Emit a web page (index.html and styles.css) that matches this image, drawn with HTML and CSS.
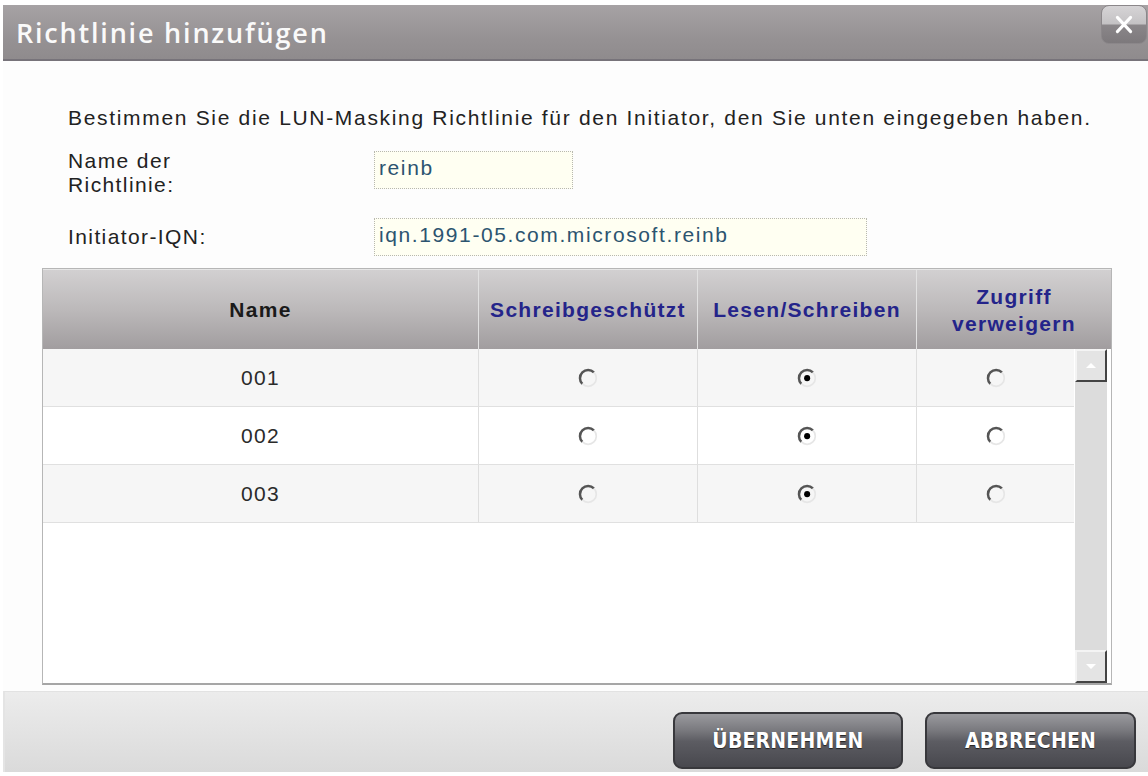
FILE: index.html
```html
<!DOCTYPE html>
<html lang="de">
<head>
<meta charset="utf-8">
<title>Richtlinie hinzufügen</title>
<link rel="stylesheet" href="styles.css">
</head>
<body>
<div class="dialog">
  <div class="titlebar">
    <span class="title">Richtlinie hinzufügen</span>
    <div class="close"><svg viewBox="0 0 46 39"><path d="M16 12 L30 27 M30 12 L16 27" stroke="#fff" stroke-width="3.2" stroke-linecap="round"/></svg></div>
  </div>
  <div class="content">
    <p class="desc">Bestimmen Sie die LUN-Masking Richtlinie für den Initiator, den Sie unten eingegeben haben.</p>
    <div class="form-row row-name">
      <label class="label">Name der<br>Richtlinie:</label>
      <div class="input input-short">reinb</div>
    </div>
    <div class="form-row row-iqn">
      <label class="label">Initiator-IQN:</label>
      <div class="input input-long">iqn.1991-05.com.microsoft.reinb</div>
    </div>
    <div class="grid">
      <div class="grid-head">
        <div class="hcell hname">Name</div>
        <div class="hcell">Schreibgeschützt</div>
        <div class="hcell">Lesen/Schreiben</div>
        <div class="hcell">Zugriff<br>verweigern</div>
      </div>
      <div class="grid-body">
        <div class="rows">
          <div class="row alt">
            <div class="cell">001</div>
            <div class="cell"><svg class="radio" viewBox="0 0 16 16"><path d="M3.9 12.3 A5.8 5.8 0 0 1 12.3 3.9" fill="none" stroke="#555" stroke-width="1.8"/><path d="M12.3 3.9 A5.8 5.8 0 0 1 3.9 12.3" fill="none" stroke="#e6e6e6" stroke-width="1.2"/></svg></div>
            <div class="cell"><svg class="radio" viewBox="0 0 16 16"><path d="M3.9 12.3 A5.8 5.8 0 0 1 12.3 3.9" fill="none" stroke="#555" stroke-width="1.8"/><path d="M12.3 3.9 A5.8 5.8 0 0 1 3.9 12.3" fill="none" stroke="#e6e6e6" stroke-width="1.2"/><circle cx="8.1" cy="8.1" r="2.2" fill="#000"/></svg></div>
            <div class="cell"><svg class="radio" viewBox="0 0 16 16"><path d="M3.9 12.3 A5.8 5.8 0 0 1 12.3 3.9" fill="none" stroke="#555" stroke-width="1.8"/><path d="M12.3 3.9 A5.8 5.8 0 0 1 3.9 12.3" fill="none" stroke="#e6e6e6" stroke-width="1.2"/></svg></div>
          </div>
          <div class="row">
            <div class="cell">002</div>
            <div class="cell"><svg class="radio" viewBox="0 0 16 16"><path d="M3.9 12.3 A5.8 5.8 0 0 1 12.3 3.9" fill="none" stroke="#555" stroke-width="1.8"/><path d="M12.3 3.9 A5.8 5.8 0 0 1 3.9 12.3" fill="none" stroke="#e6e6e6" stroke-width="1.2"/></svg></div>
            <div class="cell"><svg class="radio" viewBox="0 0 16 16"><path d="M3.9 12.3 A5.8 5.8 0 0 1 12.3 3.9" fill="none" stroke="#555" stroke-width="1.8"/><path d="M12.3 3.9 A5.8 5.8 0 0 1 3.9 12.3" fill="none" stroke="#e6e6e6" stroke-width="1.2"/><circle cx="8.1" cy="8.1" r="2.2" fill="#000"/></svg></div>
            <div class="cell"><svg class="radio" viewBox="0 0 16 16"><path d="M3.9 12.3 A5.8 5.8 0 0 1 12.3 3.9" fill="none" stroke="#555" stroke-width="1.8"/><path d="M12.3 3.9 A5.8 5.8 0 0 1 3.9 12.3" fill="none" stroke="#e6e6e6" stroke-width="1.2"/></svg></div>
          </div>
          <div class="row alt">
            <div class="cell">003</div>
            <div class="cell"><svg class="radio" viewBox="0 0 16 16"><path d="M3.9 12.3 A5.8 5.8 0 0 1 12.3 3.9" fill="none" stroke="#555" stroke-width="1.8"/><path d="M12.3 3.9 A5.8 5.8 0 0 1 3.9 12.3" fill="none" stroke="#e6e6e6" stroke-width="1.2"/></svg></div>
            <div class="cell"><svg class="radio" viewBox="0 0 16 16"><path d="M3.9 12.3 A5.8 5.8 0 0 1 12.3 3.9" fill="none" stroke="#555" stroke-width="1.8"/><path d="M12.3 3.9 A5.8 5.8 0 0 1 3.9 12.3" fill="none" stroke="#e6e6e6" stroke-width="1.2"/><circle cx="8.1" cy="8.1" r="2.2" fill="#000"/></svg></div>
            <div class="cell"><svg class="radio" viewBox="0 0 16 16"><path d="M3.9 12.3 A5.8 5.8 0 0 1 12.3 3.9" fill="none" stroke="#555" stroke-width="1.8"/><path d="M12.3 3.9 A5.8 5.8 0 0 1 3.9 12.3" fill="none" stroke="#e6e6e6" stroke-width="1.2"/></svg></div>
          </div>
        </div>
        <div class="scrollbar">
          <div class="sbtn"><svg viewBox="0 0 28 29"><path d="M9 17 L14 12 L19 17 Z" fill="#fff"/></svg></div>
          <div class="strack"></div>
          <div class="sbtn"><svg viewBox="0 0 28 29"><path d="M9 12 L19 12 L14 17 Z" fill="#fff"/></svg></div>
        </div>
      </div>
    </div>
  </div>
  <div class="footer">
    <div class="btn">ÜBERNEHMEN</div>
    <div class="btn">ABBRECHEN</div>
  </div>
</div>
</body>
</html>
```

FILE: styles.css
```css
* { box-sizing: border-box; }
html, body { margin: 0; padding: 0; }
body {
  width: 1148px;
  height: 776px;
  background: #ffffff;
  font-family: "Liberation Sans", Arial, sans-serif;
  overflow: hidden;
}
.dialog {
  margin-top: 5px;
  margin-left: 3px;
  width: 1145px;
  display: flex;
  flex-direction: column;
}
.titlebar {
  height: 56px;
  background: linear-gradient(#a6a2a4, #969294 60%, #8f8b8d);
  border-bottom: 2px solid #77737a;
  display: flex;
  align-items: flex-start;
  justify-content: space-between;
}
.title {
  color: #fafafa;
  font-family: "Open Sans", "DejaVu Sans", sans-serif;
  font-weight: 600;
  font-size: 27px;
  line-height: 28px;
  margin-top: 14px;
  margin-left: 13px;
  letter-spacing: 1.8px;
}
.close {
  width: 46px;
  height: 39px;
  border-radius: 8px;
  border: 1px solid #8b878a;
  background: linear-gradient(#d6d4d6 0%, #c4c2c4 48%, #8a8689 52%, #7d797c 100%);
  margin-right: 1px;
}
.close svg { display: block; width: 44px; height: 37px; }
.content {
  height: 630px;
  background: #fdfdfd;
  padding: 0 32px 0 39px;
  display: flex;
  flex-direction: column;
}
.desc {
  margin: 47px 0 0 26px;
  font-size: 21px;
  line-height: 20px;
  color: #222;
  letter-spacing: 1.68px;
  white-space: nowrap;
}
.form-row {
  display: flex;
  align-items: flex-start;
  padding-left: 26px;
}
.row-name { margin-top: 21px; }
.row-iqn { margin-top: 21px; align-items: center; }
.label {
  width: 306px;
  font-size: 21px;
  line-height: 24px;
  color: #222;
  letter-spacing: 1.4px;
}
.row-iqn .label { line-height: 20px; }
.input {
  height: 38px;
  background: #fffff2;
  border: 1px dotted #b8b8b0;
  color: #2c5470;
  font-size: 21px;
  line-height: 22px;
  padding: 5px 4px;
  letter-spacing: 1.6px;
  white-space: nowrap;
}
.row-name .input { margin-top: 2px; }
.input-short { width: 199px; }
.input-long { width: 493px; }
.grid {
  margin-top: 12px;
  width: 1070px;
  height: 417px;
  border: 1px solid #b6b6b6;
  border-bottom: 2px solid #a6a6a6;
  display: flex;
  flex-direction: column;
  background: #fff;
}
.grid-head {
  height: 80px;
  display: grid;
  grid-template-columns: 435px 219px 219px 1fr;
  background: linear-gradient(#d2d0d1 0%, #bcb9ba 50%, #a19d9f 100%);
  border-top: 1px solid #e6e6e6;
}
.hcell {
  display: flex;
  align-items: center;
  justify-content: center;
  text-align: center;
  font-size: 21px;
  line-height: 27px;
  font-weight: bold;
  color: #24248a;
  border-left: 1px solid #e2e2e2;
  padding-top: 0;
  letter-spacing: 1.3px;
  white-space: nowrap;
}
.hcell.hname { color: #1a1a1a; border-left: none; }
.grid-body {
  flex: 1;
  display: flex;
  min-height: 0;
}
.rows {
  width: 1031px;
  display: flex;
  flex-direction: column;
}
.row {
  height: 58px;
  display: grid;
  grid-template-columns: 435px 219px 219px 1fr;
  border-bottom: 1px solid #e0e0e0;
  background: #ffffff;
}
.row.alt { background: #f6f6f6; }
.cell {
  display: flex;
  align-items: center;
  justify-content: center;
  font-size: 21px;
  color: #2a2a2a;
  border-left: 1px solid #dedede;
  letter-spacing: 1.3px;
}
.cell:first-child { border-left: none; }
.radio { width: 22px; height: 22px; }
.scrollbar {
  width: 32px;
  margin-left: 1px;
  display: flex;
  flex-direction: column;
  background: #dcdcdc;
}
.sbtn {
  height: 33px;
  background: #e4e4e4;
  border-top: 2px solid #f4f4f4;
  border-left: 2px solid #f4f4f4;
  border-right: 2px solid #444;
  border-bottom: 2px solid #444;
}
.sbtn svg { display: block; width: 28px; height: 29px; }
.strack { flex: 1; }
.footer {
  height: 81px;
  background: linear-gradient(#ececec, #dadada);
  border-top: 1px solid #e2e2e2;
  border-left: 2px solid #e4e4e4;
  display: flex;
  justify-content: flex-end;
  align-items: flex-start;
  padding-top: 20px;
  padding-right: 12px;
  gap: 22px;
}
.btn {
  width: 230px;
  height: 57px;
  border-radius: 9px;
  border: 2px solid #38383c;
  background: linear-gradient(#9a9a9e 0%, #7a7a7f 30%, #5c5c62 52%, #48484e 100%);
  display: flex;
  align-items: center;
  justify-content: center;
  color: #fff;
  font-family: "DejaVu Sans Condensed", "DejaVu Sans", sans-serif;
  font-weight: bold;
  font-size: 21px;
  letter-spacing: 0.2px;
  text-shadow: 0 1px 1px #222;
}
.btn + .btn { width: 211px; }
```
